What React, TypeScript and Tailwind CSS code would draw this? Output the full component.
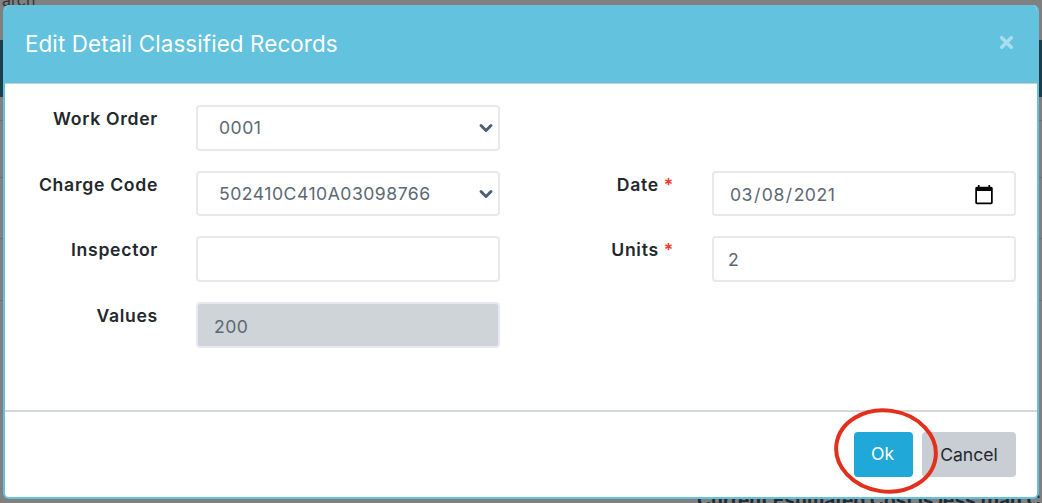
import { ChevronDown, X } from 'lucide-react'

const font = { fontFamily: 'Inter, "Noto Sans", sans-serif' }

const fieldClass =
  'h-[45.67px] w-[304px] rounded-[4px] border-2 border-[#e8e9f0] text-[17.6px] tracking-[0.5px] text-[#5c6873] outline-none'

function Label({ text, required, width }: { text: string; required?: boolean; width: string }) {
  return (
    <label className={`${width} shrink-0 pt-[2px] text-right text-[17.6px] leading-[24px] font-semibold tracking-[0.7px] whitespace-nowrap text-[#23282c]`}>
      {text}
      {required ? <span className="ml-[5px] text-[#f03a2e]">*</span> : null}
    </label>
  )
}

function SelectField({ value }: { value: string }) {
  return (
    <div className={`${fieldClass} flex items-center justify-between bg-white pt-[1px] pr-[2px] pl-[21px]`}>
      <span>{value}</span>
      <ChevronDown size={20} strokeWidth={3.5} className="text-[#4f5d73]" />
    </div>
  )
}

export default function App() {
  return (
    <div className="relative h-[503px] w-[1042px] overflow-hidden bg-[#808080] pt-[5px] pl-[3px]" style={font}>
      {/* page behind the modal */}
      <div className="absolute top-[-12px] left-[2px] text-[16px] text-[#333]">arch</div>
      <div className="absolute top-[40px] left-0 h-[57px] w-full bg-[#1d3c4c]" />
      <div className="absolute top-[120px] left-0 h-px w-full bg-[#6f6f6f]" />
      <div className="absolute top-[177px] left-0 h-px w-full bg-[#6f6f6f]" />
      <div className="absolute top-[238px] left-0 h-px w-full bg-[#6f6f6f]" />
      <div className="absolute top-[300px] left-0 h-px w-full bg-[#6f6f6f]" />
      <div className="absolute top-[487px] left-[697px] text-[19px] font-bold whitespace-nowrap text-[#1c2b36]">
        Current Estimated Cost is less than C
      </div>

      {/* modal */}
      <div className="relative flex h-[494px] w-[1036px] flex-col overflow-hidden rounded-[6px] border-x-2 border-b-2 border-x-[#63c2de] border-b-[#63c2de] bg-white">
        <div className="flex h-[79px] shrink-0 items-center justify-between border-b border-[#c8ced3] bg-[#63c2de] pr-[21px] pl-[20px]">
          <h5 className="text-[22.4px] font-normal tracking-[0.1px] text-white">Edit Detail Classified Records</h5>
          <X size={19} strokeWidth={4.5} className="-mt-[4px] text-[#a9deed]" />
        </div>

        <div className="h-[328px] shrink-0 border-b-2 border-[#d3d8dc] pt-[21px] pl-[1px]">
          <div className="flex flex-col gap-5">
            <div className="flex items-start">
              <Label text="Work Order" width="w-[152px]" />
              <div className="ml-[38px]">
                <SelectField value="0001" />
              </div>
            </div>
            <div className="flex items-start">
              <Label text="Charge Code" width="w-[152px]" />
              <div className="ml-[38px]">
                <SelectField value="502410C410A03098766" />
              </div>
              <Label text="Date" required width="w-[174px]" />
              <input
                type="date"
                defaultValue="2021-03-08"
                className={`${fieldClass} ml-[38px] bg-white pt-[3px] pr-[19px] pl-[15px] [&::-webkit-calendar-picker-indicator]:h-[22px] [&::-webkit-calendar-picker-indicator]:w-[22px] [&::-webkit-calendar-picker-indicator]:p-0`}
              />
            </div>
            <div className="flex items-start">
              <Label text="Inspector" width="w-[152px]" />
              <input className={`${fieldClass} ml-[38px] bg-white px-[16px]`} />
              <Label text="Units" required width="w-[174px]" />
              <input defaultValue="2" className={`${fieldClass} ml-[38px] bg-white px-[14px]`} />
            </div>
            <div className="flex items-start">
              <Label text="Values" width="w-[152px]" />
              <input
                disabled
                defaultValue="200"
                className={`${fieldClass} ml-[38px] bg-[#ced4d8] px-[16px] pt-[3px]`}
              />
            </div>
          </div>
        </div>

        <div className="flex flex-1 items-start justify-end gap-[9px] pt-[20px] pr-[21px]">
          <button className="h-[45px] w-[59px] rounded-[4px] bg-[#20a8d8] pr-[2px] text-[17.6px] text-white">Ok</button>
          <button className="h-[45px] w-[94px] rounded-[4px] bg-[#c8ced3] pt-[1px] text-[17.6px] text-[#23282c]">Cancel</button>
        </div>

        {/* hand-drawn annotation */}
        <svg className="absolute top-[401px] left-[827px]" width="110" height="92" viewBox="0 0 110 92" fill="none">
          <ellipse cx="54" cy="45" rx="50" ry="40.5" transform="rotate(8 54 45)" stroke="#e2301c" strokeWidth="4" />
        </svg>
      </div>
    </div>
  )
}
